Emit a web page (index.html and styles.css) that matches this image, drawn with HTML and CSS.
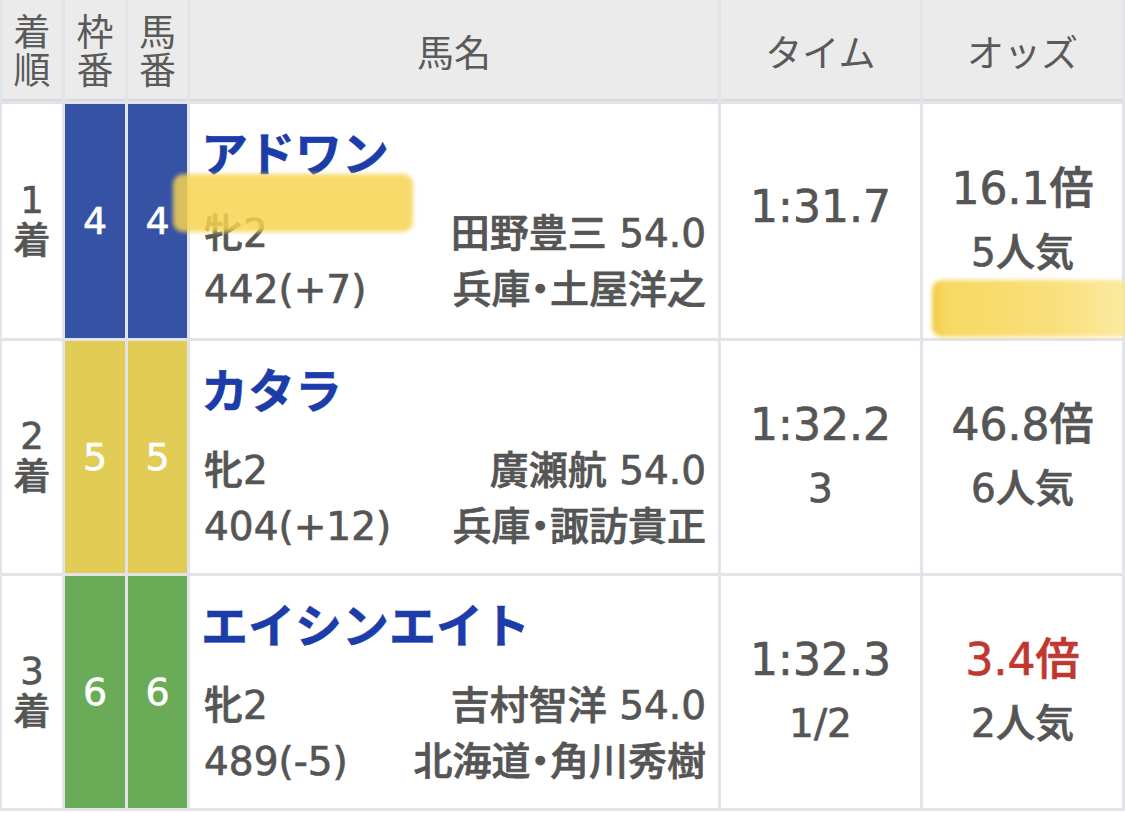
FILE: index.html
```html
<!DOCTYPE html>
<html lang="ja">
<head>
<meta charset="utf-8">
<title>レース結果</title>
<link rel="stylesheet" href="styles.css">
</head>
<body>
<div class="table">
  <div class="th stack"><span class="ch">着</span><span class="ch">順</span></div>
  <div class="th stack"><span class="ch">枠</span><span class="ch">番</span></div>
  <div class="th stack"><span class="ch">馬</span><span class="ch">番</span></div>
  <div class="th">馬名</div>
  <div class="th">タイム</div>
  <div class="th">オッズ</div>

  <div class="td rank"><span class="ch">1</span><span class="ch">着</span></div>
  <div class="td num waku4">4</div>
  <div class="td num waku4">4</div>
  <div class="td horse">
    <div class="name">アドワン</div>
    <div class="info"><span>牝2</span><span>田野豊三 54.0</span></div>
    <div class="info"><span>442(+7)</span><span class="tr">兵庫・土屋洋之</span></div>
  </div>
  <div class="td time"><div class="t-main">1:31.7</div><div class="t-sub empty"></div></div>
  <div class="td odds"><div class="o-main">16.1倍</div><div class="o-sub">5人気</div></div>

  <div class="td rank"><span class="ch">2</span><span class="ch">着</span></div>
  <div class="td num waku5">5</div>
  <div class="td num waku5">5</div>
  <div class="td horse">
    <div class="name">カタラ</div>
    <div class="info"><span>牝2</span><span>廣瀬航 54.0</span></div>
    <div class="info"><span>404(+12)</span><span class="tr">兵庫・諏訪貴正</span></div>
  </div>
  <div class="td time"><div class="t-main">1:32.2</div><div class="t-sub">3</div></div>
  <div class="td odds"><div class="o-main">46.8倍</div><div class="o-sub">6人気</div></div>

  <div class="td rank"><span class="ch">3</span><span class="ch">着</span></div>
  <div class="td num waku6">6</div>
  <div class="td num waku6">6</div>
  <div class="td horse">
    <div class="name">エイシンエイト</div>
    <div class="info"><span>牝2</span><span>吉村智洋 54.0</span></div>
    <div class="info"><span>489(-5)</span><span class="tr">北海道・角川秀樹</span></div>
  </div>
  <div class="td time"><div class="t-main">1:32.3</div><div class="t-sub">1/2</div></div>
  <div class="td odds"><div class="o-main fav">3.4倍</div><div class="o-sub">2人気</div></div>

  <div class="marker marker-a"></div>
  <div class="marker marker-b"></div>
</div>
</body>
</html>
```

FILE: styles.css
```css
html, body {
  margin: 0;
  padding: 0;
  background: #ffffff;
}

body {
  font-family: "DejaVu Sans", "Noto Sans CJK JP", sans-serif;
  color: #555555;
}

.table {
  position: relative;
  display: grid;
  grid-template-columns: 60px 60px 59px 528px 199px 199px;
  grid-template-rows: 101px 234px 232px 232px;
  gap: 3px;
  padding: 0 3px 3px 2px;
  width: 1120px;
  background: #e3e3ea;
}

.th {
  background: #ebebeb;
  display: flex;
  align-items: center;
  justify-content: center;
  font-family: "Noto Sans CJK JP", sans-serif;
  font-size: 37px;
  font-weight: 400;
  color: #5a5a5a;
  box-shadow: inset 0 -2px 0 #dadade;
}

.th.stack {
  flex-direction: column;
  padding-bottom: 4px;
}

.ch {
  display: block;
  height: 38px;
  line-height: 38px;
  text-align: center;
}

.td {
  background: #ffffff;
}

.rank {
  display: flex;
  flex-direction: column;
  align-items: center;
  justify-content: center;
  font-size: 37px;
  font-weight: 500;
  -webkit-text-stroke: 0.6px #555555;
}

.rank .ch {
  height: 41px;
  line-height: 41px;
}

.num {
  display: flex;
  align-items: center;
  justify-content: center;
  color: #ffffff;
  font-size: 38px;
  -webkit-text-stroke: 0.6px #ffffff;
}

.waku4 { background: #3552a5; }
.waku5 { background: #e1cc55; }
.waku6 { background: #6aab57; }

.horse {
  padding: 16px 12px 0 14px;
  font-size: 39px;
  font-weight: 500;
  -webkit-text-stroke: 0.7px #555555;
}

.name {
  font-family: "Noto Sans CJK JP", sans-serif;
  font-weight: 700;
  font-size: 47px;
  line-height: 62px;
  color: #1c3ca9;
  margin-bottom: 24px;
  margin-left: -3px;
  -webkit-text-stroke: 0.5px #1c3ca9;
}

.info {
  display: flex;
  justify-content: space-between;
  line-height: 56px;
  white-space: nowrap;
}

.tr {
  font-feature-settings: "palt";
}

.time, .odds {
  display: flex;
  flex-direction: column;
  align-items: center;
  justify-content: center;
  font-weight: 500;
  -webkit-text-stroke: 0.7px #555555;
}

.t-main {
  font-size: 44px;
  line-height: 64px;
}

.t-sub {
  font-size: 39px;
  line-height: 64px;
}

.t-sub.empty {
  height: 28px;
}

.o-main {
  font-size: 44px;
  line-height: 64px;
}

.o-main.fav {
  color: #c0372f;
  -webkit-text-stroke: 0.7px #c0372f;
}

.o-sub {
  font-size: 39px;
  line-height: 64px;
}

.marker {
  position: absolute;
  border-radius: 10px;
  filter: blur(2px);
}

.marker-a {
  left: 173px;
  top: 174px;
  width: 240px;
  height: 58px;
  background: rgba(247, 212, 80, 0.85);
}

.marker-b {
  left: 932px;
  top: 280px;
  width: 200px;
  height: 57px;
  background: linear-gradient(90deg, rgba(242, 200, 55, 0.95) 0px, rgba(246, 212, 80, 0.9) 14px, rgba(248, 218, 100, 0.85) 60%, rgba(250, 230, 140, 0.8) 100%);
}
```
